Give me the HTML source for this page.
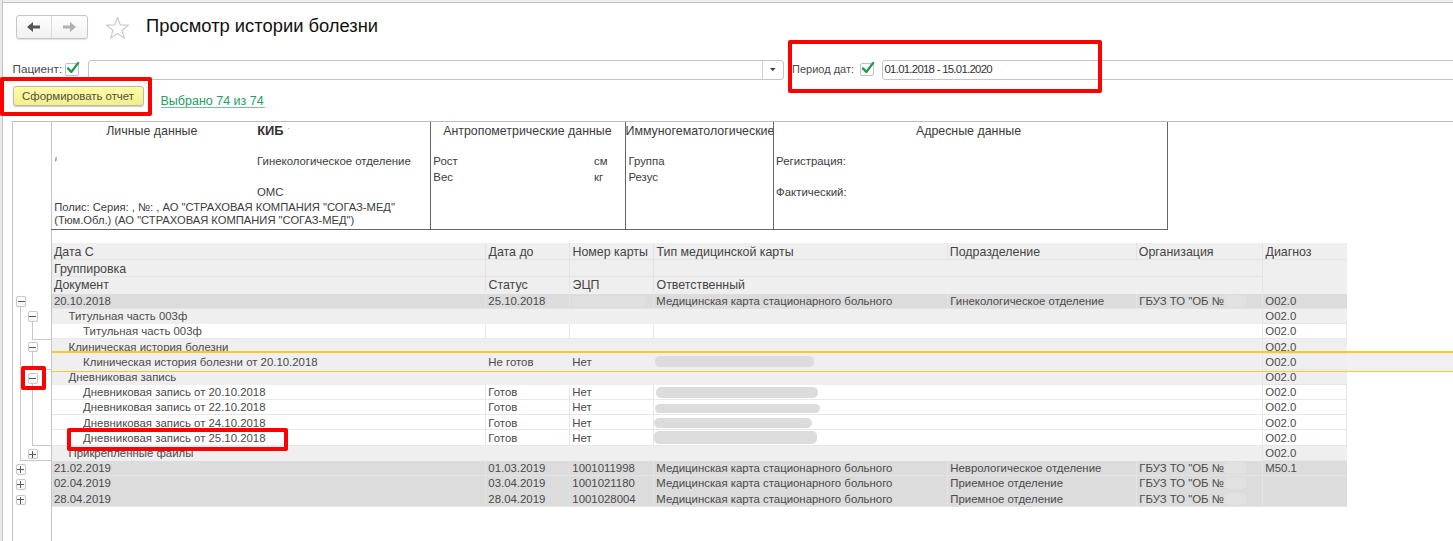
<!DOCTYPE html>
<html><head><meta charset="utf-8"><style>
html,body{margin:0;padding:0;}
body{width:1453px;height:541px;overflow:hidden;position:relative;background:#fff;font-family:"Liberation Sans", sans-serif;}
body div, body span, body svg{position:absolute;}
span{white-space:nowrap;line-height:1;}
</style></head><body>
<div style="left:0px;top:0px;width:1453px;height:2px;background:#efefef"></div>
<div style="left:0px;top:2px;width:1453px;height:1px;background:#c2c2c2"></div>
<div style="left:0px;top:0px;width:2px;height:541px;background:#e9e9e9"></div>
<div style="left:2px;top:0px;width:1px;height:541px;background:#c2c2c2"></div>
<div style="left:15.6px;top:15.2px;width:72.4px;height:23.4px;box-sizing:border-box;border:1px solid #c6c6c6;border-radius:3px;background:linear-gradient(#ffffff,#f1f1f1);box-shadow:0 1px 1px rgba(0,0,0,0.12)"></div>
<div style="left:51.4px;top:16px;width:1px;height:22px;background:#dcdcdc"></div>
<svg style="position:absolute;left:26px;top:21px" width="16" height="12" viewBox="0 0 16 12"><path d="M1 6 L7 1 L7 4.5 L14 4.5 L14 7.5 L7 7.5 L7 11 Z" fill="#555"/></svg>
<svg style="position:absolute;left:61.4px;top:21px" width="16" height="12" viewBox="0 0 16 12"><path d="M15 6 L9 1 L9 4.5 L2 4.5 L2 7.5 L9 7.5 L9 11 Z" fill="#b0b0b0"/></svg>
<svg style="position:absolute;left:105px;top:16px" width="25" height="24" viewBox="0 0 25 24"><path d="M12.5 1.5 L15.3 9 L23.5 9.2 L17 14.2 L19.4 22.3 L12.5 17.6 L5.6 22.3 L8 14.2 L1.5 9.2 L9.7 9 Z" fill="none" stroke="#c9ccd0" stroke-width="1.2" stroke-linejoin="round"/></svg>
<span style="left:146px;top:17.27px;font-size:18.35px;color:#111;">Просмотр истории болезни</span>
<span style="left:12.5px;top:63.40px;font-size:11.7px;color:#4a4a4a;">Пациент:</span>
<div style="left:65.3px;top:63px;width:13.4px;height:12.8px;box-sizing:border-box;border:1px solid #c2c2c2;border-radius:2px;background:#fff"></div>
<svg style="position:absolute;left:65px;top:60px" width="16" height="16" viewBox="0 0 16 16"><path d="M3 8.4 L6.3 12 L13.2 2.9" fill="none" stroke="#1f9a4a" stroke-width="2.3" stroke-linecap="round" stroke-linejoin="round"/></svg>
<div style="left:87.6px;top:59.6px;width:696px;height:20px;box-sizing:border-box;border:1px solid #c4c4c4;border-radius:3px;background:#fff"></div>
<div style="left:762.4px;top:60.6px;width:1px;height:17.999999999999993px;background:#d0d0d0"></div>
<svg style="position:absolute;left:769.6px;top:68.2px" width="6" height="4" viewBox="0 0 6 4"><path d="M0 0 L5.6 0 L2.8 3.3 Z" fill="#444"/></svg>
<span style="left:792px;top:63.99px;font-size:11.0px;color:#4a4a4a;">Период дат:</span>
<div style="left:860.3px;top:63px;width:13.4px;height:12.8px;box-sizing:border-box;border:1px solid #c2c2c2;border-radius:2px;background:#fff"></div>
<svg style="position:absolute;left:860px;top:60px" width="16" height="16" viewBox="0 0 16 16"><path d="M3 8.4 L6.3 12 L13.2 2.9" fill="none" stroke="#1f9a4a" stroke-width="2.3" stroke-linecap="round" stroke-linejoin="round"/></svg>
<div style="left:882px;top:59.6px;width:600px;height:20px;box-sizing:border-box;border:1px solid #c4c4c4;border-radius:3px;background:#fff"></div>
<span style="left:884.5px;top:63.75px;font-size:11.4px;color:#333;letter-spacing:-0.73px">01.01.2018 - 15.01.2020</span>
<div style="left:787.5px;top:39.5px;width:314.5px;height:53px;box-sizing:border-box;border:4px solid #fd0000;border-radius:2px"></div>
<div style="left:12.5px;top:86.4px;width:131px;height:20px;box-sizing:border-box;border:1px solid #bdbba6;border-radius:3px;background:linear-gradient(#fefea8,#f3ef8e);box-shadow:0 1px 1px rgba(0,0,0,0.22)"></div>
<span style="left:22.1px;top:91.15px;font-size:11.4px;color:#505045;">Сформировать отчет</span>
<div style="left:0px;top:77.1px;width:152.4px;height:38.9px;box-sizing:border-box;border:4px solid #fd0000;border-radius:2px"></div>
<span style="left:160.5px;top:94.82px;font-size:12.5px;color:#22a064;">Выбрано 74 из 74</span>
<div style="left:160.5px;top:106.8px;width:104.0px;height:1.2px;background:#6cc393"></div>
<div style="left:12px;top:121px;width:1441px;height:1px;background:#bdbdbd"></div>
<div style="left:12px;top:121px;width:1px;height:420px;background:#c6c6c6"></div>
<div style="left:51px;top:121px;width:1px;height:420px;background:#c6c6c6"></div>
<div style="left:430px;top:122px;width:1px;height:108px;background:#666"></div>
<div style="left:625px;top:122px;width:1px;height:108px;background:#666"></div>
<div style="left:773px;top:122px;width:1px;height:108px;background:#666"></div>
<div style="left:1167px;top:122px;width:1px;height:108px;background:#666"></div>
<div style="left:51px;top:229px;width:1117px;height:1px;background:#666"></div>
<span style="left:106.2px;top:125.10px;font-size:12.4px;color:#3c3c3c;">Личные данные</span>
<span style="left:257.2px;top:124.68px;font-size:12.9px;color:#333;font-weight:bold">КИБ</span>
<div style="left:287.8px;top:127.5px;width:1px;height:1.2px;background:#bbb"></div>
<svg style="position:absolute;left:53px;top:155px" width="5" height="10" viewBox="0 0 5 10"><path d="M3.2 2.2 L2.7 6.2" stroke="#7a6a60" stroke-width="1.1" fill="none"/></svg>
<span style="left:257px;top:156.25px;font-size:11.4px;color:#3c3c3c;">Гинекологическое отделение</span>
<span style="left:257px;top:187.25px;font-size:11.4px;color:#3c3c3c;">ОМС</span>
<span style="left:54.2px;top:202.02px;font-size:11.2px;color:#3c3c3c;">Полис: Серия: , №: , АО "СТРАХОВАЯ КОМПАНИЯ "СОГАЗ-МЕД"</span>
<span style="left:54.2px;top:214.92px;font-size:11.2px;color:#3c3c3c;">(Тюм.Обл.) (АО "СТРАХОВАЯ КОМПАНИЯ "СОГАЗ-МЕД")</span>
<span style="left:443.2px;top:125.10px;font-size:12.4px;color:#3c3c3c;">Антропометрические данные</span>
<span style="left:433.3px;top:156.25px;font-size:11.4px;color:#3c3c3c;">Рост</span>
<span style="left:433.3px;top:171.75px;font-size:11.4px;color:#3c3c3c;">Вес</span>
<span style="left:594px;top:156.25px;font-size:11.4px;color:#3c3c3c;">см</span>
<span style="left:594px;top:171.75px;font-size:11.4px;color:#3c3c3c;">кг</span>
<div style="left:626px;top:121px;width:147px;height:30px;overflow:hidden">
<span style="left:-0.5px;top:4.10px;font-size:12.4px;color:#3c3c3c;">Иммуногематологические</span>
</div>
<span style="left:628.4px;top:156.25px;font-size:11.4px;color:#3c3c3c;">Группа</span>
<span style="left:628.4px;top:171.75px;font-size:11.4px;color:#3c3c3c;">Резус</span>
<span style="left:776.1px;top:156.25px;font-size:11.4px;color:#3c3c3c;">Регистрация:</span>
<span style="left:776.1px;top:187.25px;font-size:11.4px;color:#3c3c3c;">Фактический:</span>
<span style="left:915.9px;top:124.80px;font-size:12.4px;color:#3c3c3c;">Адресные данные</span>
<div style="left:52px;top:243px;width:1295px;height:50.6px;background:#efefef"></div>
<div style="left:52px;top:259px;width:1295px;height:1px;background:#e4e4e4"></div>
<div style="left:52px;top:276px;width:1210px;height:1px;background:#e4e4e4"></div>
<div style="left:485px;top:243px;width:1px;height:16px;background:#e4e4e4"></div>
<div style="left:569px;top:243px;width:1px;height:16px;background:#e4e4e4"></div>
<div style="left:653px;top:243px;width:1px;height:16px;background:#e4e4e4"></div>
<div style="left:947px;top:243px;width:1px;height:16px;background:#e4e4e4"></div>
<div style="left:1136px;top:243px;width:1px;height:16px;background:#e4e4e4"></div>
<div style="left:1262px;top:243px;width:1px;height:16px;background:#e4e4e4"></div>
<div style="left:485px;top:259px;width:1px;height:34px;background:#e4e4e4"></div>
<div style="left:569px;top:259px;width:1px;height:34px;background:#e4e4e4"></div>
<div style="left:653px;top:259px;width:1px;height:34px;background:#e4e4e4"></div>
<div style="left:1262px;top:259px;width:1px;height:34px;background:#e4e4e4"></div>
<span style="left:53.9px;top:246.10px;font-size:12.4px;color:#444;">Дата С</span>
<span style="left:488.5px;top:246.10px;font-size:12.4px;color:#444;">Дата до</span>
<span style="left:572.5px;top:246.10px;font-size:12.4px;color:#444;">Номер карты</span>
<span style="left:656.5px;top:246.10px;font-size:12.4px;color:#444;">Тип медицинской карты</span>
<span style="left:949.8px;top:246.10px;font-size:12.4px;color:#444;">Подразделение</span>
<span style="left:1138.8px;top:246.10px;font-size:12.4px;color:#444;">Организация</span>
<span style="left:1265.5px;top:246.10px;font-size:12.4px;color:#444;">Диагноз</span>
<span style="left:53.9px;top:262.70px;font-size:12.4px;color:#444;">Группировка</span>
<span style="left:53.9px;top:279.10px;font-size:12.4px;color:#444;">Документ</span>
<span style="left:488.5px;top:279.10px;font-size:12.4px;color:#444;">Статус</span>
<span style="left:572.5px;top:279.10px;font-size:12.4px;color:#444;">ЭЦП</span>
<span style="left:656.5px;top:279.10px;font-size:12.4px;color:#444;">Ответственный</span>
<div style="left:52px;top:293.6px;width:1295px;height:15.29px;background:#dcdcdc"></div>
<div style="left:52px;top:308.29px;width:1295px;height:1px;background:#e4e4e4"></div>
<div style="left:485px;top:293.6px;width:1px;height:15.189999999999998px;background:#e4e4e4"></div>
<div style="left:569px;top:293.6px;width:1px;height:15.189999999999998px;background:#e4e4e4"></div>
<div style="left:653px;top:293.6px;width:1px;height:15.189999999999998px;background:#e4e4e4"></div>
<div style="left:947px;top:293.6px;width:1px;height:15.189999999999998px;background:#e4e4e4"></div>
<div style="left:1136px;top:293.6px;width:1px;height:15.189999999999998px;background:#e4e4e4"></div>
<div style="left:1262px;top:293.6px;width:1px;height:15.189999999999998px;background:#e4e4e4"></div>
<span style="left:53.9px;top:296.05px;font-size:11.4px;color:#4a4a4a;">20.10.2018</span>
<span style="left:488.3px;top:296.05px;font-size:11.4px;color:#4a4a4a;">25.10.2018</span>
<span style="left:656.3px;top:296.05px;font-size:11.4px;color:#4a4a4a;">Медицинская карта стационарного больного</span>
<span style="left:950.3px;top:296.05px;font-size:11.4px;color:#4a4a4a;">Гинекологическое отделение</span>
<span style="left:1139.3px;top:296.05px;font-size:11.4px;color:#4a4a4a;">ГБУЗ ТО "ОБ №</span>
<span style="left:1265.3px;top:296.05px;font-size:11.4px;color:#4a4a4a;">O02.0</span>
<div style="left:52px;top:308.79px;width:1295px;height:15.29px;background:#efefef"></div>
<div style="left:1262px;top:308.79px;width:1px;height:15.189999999999998px;background:#e6e6e6"></div>
<div style="left:1262px;top:322.98px;width:85px;height:1px;background:#e6e6e6"></div>
<span style="left:68.5px;top:311.24px;font-size:11.4px;color:#4a4a4a;">Титульная часть 003ф</span>
<span style="left:1265.3px;top:311.24px;font-size:11.4px;color:#4a4a4a;">O02.0</span>
<div style="left:52px;top:323.98px;width:1295px;height:15.29px;background:#ffffff"></div>
<div style="left:52px;top:338.17px;width:1295px;height:1px;background:#e8e8e8"></div>
<div style="left:485px;top:323.98px;width:1px;height:15.189999999999998px;background:#e8e8e8"></div>
<div style="left:569px;top:323.98px;width:1px;height:15.189999999999998px;background:#e8e8e8"></div>
<div style="left:653px;top:323.98px;width:1px;height:15.189999999999998px;background:#e8e8e8"></div>
<div style="left:1262px;top:323.98px;width:1px;height:15.189999999999998px;background:#e8e8e8"></div>
<div style="left:1346px;top:323.98px;width:1px;height:15.189999999999998px;background:#e8e8e8"></div>
<span style="left:83.1px;top:326.43px;font-size:11.4px;color:#4a4a4a;">Титульная часть 003ф</span>
<span style="left:1265.3px;top:326.43px;font-size:11.4px;color:#4a4a4a;">O02.0</span>
<div style="left:52px;top:339.17px;width:1295px;height:15.29px;background:#efefef"></div>
<div style="left:1262px;top:339.17px;width:1px;height:15.189999999999998px;background:#e6e6e6"></div>
<div style="left:1262px;top:353.36px;width:85px;height:1px;background:#e6e6e6"></div>
<span style="left:68.5px;top:341.62px;font-size:11.4px;color:#4a4a4a;">Клиническая история болезни</span>
<span style="left:1265.3px;top:341.62px;font-size:11.4px;color:#4a4a4a;">O02.0</span>
<div style="left:52px;top:354.36px;width:1295px;height:15.29px;background:#efefef"></div>
<div style="left:1262px;top:354.36px;width:1px;height:15.189999999999998px;background:#e6e6e6"></div>
<div style="left:1262px;top:368.55px;width:85px;height:1px;background:#e6e6e6"></div>
<span style="left:83.1px;top:356.81px;font-size:11.4px;color:#4a4a4a;">Клиническая история болезни от 20.10.2018</span>
<span style="left:488.3px;top:356.81px;font-size:11.4px;color:#4a4a4a;">Не готов</span>
<span style="left:572.3px;top:356.81px;font-size:11.4px;color:#4a4a4a;">Нет</span>
<span style="left:1265.3px;top:356.81px;font-size:11.4px;color:#4a4a4a;">O02.0</span>
<div style="left:52px;top:369.55px;width:1295px;height:15.29px;background:#efefef"></div>
<div style="left:1262px;top:369.55px;width:1px;height:15.189999999999998px;background:#e6e6e6"></div>
<div style="left:1262px;top:383.74px;width:85px;height:1px;background:#e6e6e6"></div>
<span style="left:68.5px;top:372.00px;font-size:11.4px;color:#4a4a4a;">Дневниковая запись</span>
<span style="left:1265.3px;top:372.00px;font-size:11.4px;color:#4a4a4a;">O02.0</span>
<div style="left:52px;top:384.74px;width:1295px;height:15.29px;background:#ffffff"></div>
<div style="left:52px;top:398.93px;width:1295px;height:1px;background:#e8e8e8"></div>
<div style="left:485px;top:384.74px;width:1px;height:15.189999999999998px;background:#e8e8e8"></div>
<div style="left:569px;top:384.74px;width:1px;height:15.189999999999998px;background:#e8e8e8"></div>
<div style="left:653px;top:384.74px;width:1px;height:15.189999999999998px;background:#e8e8e8"></div>
<div style="left:1262px;top:384.74px;width:1px;height:15.189999999999998px;background:#e8e8e8"></div>
<div style="left:1346px;top:384.74px;width:1px;height:15.189999999999998px;background:#e8e8e8"></div>
<span style="left:83.1px;top:387.19px;font-size:11.4px;color:#4a4a4a;">Дневниковая запись от 20.10.2018</span>
<span style="left:488.3px;top:387.19px;font-size:11.4px;color:#4a4a4a;">Готов</span>
<span style="left:572.3px;top:387.19px;font-size:11.4px;color:#4a4a4a;">Нет</span>
<span style="left:1265.3px;top:387.19px;font-size:11.4px;color:#4a4a4a;">O02.0</span>
<div style="left:52px;top:399.93px;width:1295px;height:15.29px;background:#ffffff"></div>
<div style="left:52px;top:414.12px;width:1295px;height:1px;background:#e8e8e8"></div>
<div style="left:485px;top:399.93px;width:1px;height:15.189999999999998px;background:#e8e8e8"></div>
<div style="left:569px;top:399.93px;width:1px;height:15.189999999999998px;background:#e8e8e8"></div>
<div style="left:653px;top:399.93px;width:1px;height:15.189999999999998px;background:#e8e8e8"></div>
<div style="left:1262px;top:399.93px;width:1px;height:15.189999999999998px;background:#e8e8e8"></div>
<div style="left:1346px;top:399.93px;width:1px;height:15.189999999999998px;background:#e8e8e8"></div>
<span style="left:83.1px;top:402.38px;font-size:11.4px;color:#4a4a4a;">Дневниковая запись от 22.10.2018</span>
<span style="left:488.3px;top:402.38px;font-size:11.4px;color:#4a4a4a;">Готов</span>
<span style="left:572.3px;top:402.38px;font-size:11.4px;color:#4a4a4a;">Нет</span>
<span style="left:1265.3px;top:402.38px;font-size:11.4px;color:#4a4a4a;">O02.0</span>
<div style="left:52px;top:415.12px;width:1295px;height:15.29px;background:#ffffff"></div>
<div style="left:52px;top:429.31px;width:1295px;height:1px;background:#e8e8e8"></div>
<div style="left:485px;top:415.12px;width:1px;height:15.189999999999998px;background:#e8e8e8"></div>
<div style="left:569px;top:415.12px;width:1px;height:15.189999999999998px;background:#e8e8e8"></div>
<div style="left:653px;top:415.12px;width:1px;height:15.189999999999998px;background:#e8e8e8"></div>
<div style="left:1262px;top:415.12px;width:1px;height:15.189999999999998px;background:#e8e8e8"></div>
<div style="left:1346px;top:415.12px;width:1px;height:15.189999999999998px;background:#e8e8e8"></div>
<span style="left:83.1px;top:417.57px;font-size:11.4px;color:#4a4a4a;">Дневниковая запись от 24.10.2018</span>
<span style="left:488.3px;top:417.57px;font-size:11.4px;color:#4a4a4a;">Готов</span>
<span style="left:572.3px;top:417.57px;font-size:11.4px;color:#4a4a4a;">Нет</span>
<span style="left:1265.3px;top:417.57px;font-size:11.4px;color:#4a4a4a;">O02.0</span>
<div style="left:52px;top:430.31px;width:1295px;height:15.29px;background:#ffffff"></div>
<div style="left:52px;top:444.5px;width:1295px;height:1px;background:#e8e8e8"></div>
<div style="left:485px;top:430.31000000000006px;width:1px;height:15.189999999999998px;background:#e8e8e8"></div>
<div style="left:569px;top:430.31000000000006px;width:1px;height:15.189999999999998px;background:#e8e8e8"></div>
<div style="left:653px;top:430.31000000000006px;width:1px;height:15.189999999999998px;background:#e8e8e8"></div>
<div style="left:1262px;top:430.31000000000006px;width:1px;height:15.189999999999998px;background:#e8e8e8"></div>
<div style="left:1346px;top:430.31000000000006px;width:1px;height:15.189999999999998px;background:#e8e8e8"></div>
<span style="left:83.1px;top:432.76px;font-size:11.4px;color:#4a4a4a;">Дневниковая запись от 25.10.2018</span>
<span style="left:488.3px;top:432.76px;font-size:11.4px;color:#4a4a4a;">Готов</span>
<span style="left:572.3px;top:432.76px;font-size:11.4px;color:#4a4a4a;">Нет</span>
<span style="left:1265.3px;top:432.76px;font-size:11.4px;color:#4a4a4a;">O02.0</span>
<div style="left:52px;top:445.5px;width:1295px;height:15.29px;background:#efefef"></div>
<div style="left:1262px;top:445.5px;width:1px;height:15.189999999999998px;background:#e6e6e6"></div>
<div style="left:1262px;top:459.69px;width:85px;height:1px;background:#e6e6e6"></div>
<span style="left:68.5px;top:447.95px;font-size:11.4px;color:#4a4a4a;">Прикрепленные файлы</span>
<span style="left:1265.3px;top:447.95px;font-size:11.4px;color:#4a4a4a;">O02.0</span>
<div style="left:52px;top:460.69px;width:1295px;height:15.29px;background:#dcdcdc"></div>
<div style="left:52px;top:475.38px;width:1295px;height:1px;background:#e4e4e4"></div>
<div style="left:485px;top:460.69000000000005px;width:1px;height:15.189999999999998px;background:#e4e4e4"></div>
<div style="left:569px;top:460.69000000000005px;width:1px;height:15.189999999999998px;background:#e4e4e4"></div>
<div style="left:653px;top:460.69000000000005px;width:1px;height:15.189999999999998px;background:#e4e4e4"></div>
<div style="left:947px;top:460.69000000000005px;width:1px;height:15.189999999999998px;background:#e4e4e4"></div>
<div style="left:1136px;top:460.69000000000005px;width:1px;height:15.189999999999998px;background:#e4e4e4"></div>
<div style="left:1262px;top:460.69000000000005px;width:1px;height:15.189999999999998px;background:#e4e4e4"></div>
<span style="left:53.9px;top:463.14px;font-size:11.4px;color:#4a4a4a;">21.02.2019</span>
<span style="left:488.3px;top:463.14px;font-size:11.4px;color:#4a4a4a;">01.03.2019</span>
<span style="left:572.3px;top:463.14px;font-size:11.4px;color:#4a4a4a;">1001011998</span>
<span style="left:656.3px;top:463.14px;font-size:11.4px;color:#4a4a4a;">Медицинская карта стационарного больного</span>
<span style="left:950.3px;top:463.14px;font-size:11.4px;color:#4a4a4a;">Неврологическое отделение</span>
<span style="left:1139.3px;top:463.14px;font-size:11.4px;color:#4a4a4a;">ГБУЗ ТО "ОБ №</span>
<span style="left:1265.3px;top:463.14px;font-size:11.4px;color:#4a4a4a;">M50.1</span>
<div style="left:52px;top:475.88px;width:1295px;height:15.29px;background:#dcdcdc"></div>
<div style="left:52px;top:490.57px;width:1295px;height:1px;background:#e4e4e4"></div>
<div style="left:485px;top:475.88px;width:1px;height:15.189999999999998px;background:#e4e4e4"></div>
<div style="left:569px;top:475.88px;width:1px;height:15.189999999999998px;background:#e4e4e4"></div>
<div style="left:653px;top:475.88px;width:1px;height:15.189999999999998px;background:#e4e4e4"></div>
<div style="left:947px;top:475.88px;width:1px;height:15.189999999999998px;background:#e4e4e4"></div>
<div style="left:1136px;top:475.88px;width:1px;height:15.189999999999998px;background:#e4e4e4"></div>
<div style="left:1262px;top:475.88px;width:1px;height:15.189999999999998px;background:#e4e4e4"></div>
<span style="left:53.9px;top:478.33px;font-size:11.4px;color:#4a4a4a;">02.04.2019</span>
<span style="left:488.3px;top:478.33px;font-size:11.4px;color:#4a4a4a;">03.04.2019</span>
<span style="left:572.3px;top:478.33px;font-size:11.4px;color:#4a4a4a;">1001021180</span>
<span style="left:656.3px;top:478.33px;font-size:11.4px;color:#4a4a4a;">Медицинская карта стационарного больного</span>
<span style="left:950.3px;top:478.33px;font-size:11.4px;color:#4a4a4a;">Приемное отделение</span>
<span style="left:1139.3px;top:478.33px;font-size:11.4px;color:#4a4a4a;">ГБУЗ ТО "ОБ №</span>
<div style="left:52px;top:491.07px;width:1295px;height:15.29px;background:#dcdcdc"></div>
<div style="left:52px;top:505.76px;width:1295px;height:1px;background:#e4e4e4"></div>
<div style="left:485px;top:491.07000000000005px;width:1px;height:15.189999999999998px;background:#e4e4e4"></div>
<div style="left:569px;top:491.07000000000005px;width:1px;height:15.189999999999998px;background:#e4e4e4"></div>
<div style="left:653px;top:491.07000000000005px;width:1px;height:15.189999999999998px;background:#e4e4e4"></div>
<div style="left:947px;top:491.07000000000005px;width:1px;height:15.189999999999998px;background:#e4e4e4"></div>
<div style="left:1136px;top:491.07000000000005px;width:1px;height:15.189999999999998px;background:#e4e4e4"></div>
<div style="left:1262px;top:491.07000000000005px;width:1px;height:15.189999999999998px;background:#e4e4e4"></div>
<span style="left:53.9px;top:493.52px;font-size:11.4px;color:#4a4a4a;">28.04.2019</span>
<span style="left:488.3px;top:493.52px;font-size:11.4px;color:#4a4a4a;">28.04.2019</span>
<span style="left:572.3px;top:493.52px;font-size:11.4px;color:#4a4a4a;">1001028004</span>
<span style="left:656.3px;top:493.52px;font-size:11.4px;color:#4a4a4a;">Медицинская карта стационарного больного</span>
<span style="left:950.3px;top:493.52px;font-size:11.4px;color:#4a4a4a;">Приемное отделение</span>
<span style="left:1139.3px;top:493.52px;font-size:11.4px;color:#4a4a4a;">ГБУЗ ТО "ОБ №</span>
<div style="left:570.6px;top:295.5px;width:76.29999999999995px;height:11.5px;background:#e0e0e0;border-radius:5px;filter:blur(0.4px)"></div>
<div style="left:1223.5px;top:295.2px;width:23.0px;height:12.0px;background:#e1e1e1;border-radius:5px;filter:blur(0.4px)"></div>
<div style="left:1223.5px;top:462.29px;width:23.0px;height:12.0px;background:#e1e1e1;border-radius:5px;filter:blur(0.4px)"></div>
<div style="left:1223.5px;top:477.48px;width:23.0px;height:12.0px;background:#e1e1e1;border-radius:5px;filter:blur(0.4px)"></div>
<div style="left:1223.5px;top:492.67px;width:23.0px;height:12.0px;background:#e1e1e1;border-radius:5px;filter:blur(0.4px)"></div>
<div style="left:654.8px;top:355.8px;width:159.60000000000002px;height:11.5px;background:#dcdcdc;border-radius:5px;filter:blur(0.4px)"></div>
<div style="left:656.4px;top:386.6px;width:161.80000000000007px;height:11.199999999999989px;background:#dcdcdc;border-radius:5px;filter:blur(0.4px)"></div>
<div style="left:655.4px;top:403.6px;width:165.10000000000002px;height:9.599999999999966px;background:#dcdcdc;border-radius:5px;filter:blur(0.4px)"></div>
<div style="left:653.9px;top:417.5px;width:158.60000000000002px;height:10.0px;background:#dcdcdc;border-radius:5px;filter:blur(0.4px)"></div>
<div style="left:654.4px;top:431px;width:162.89999999999998px;height:13px;background:#dcdcdc;border-radius:5px;filter:blur(0.4px)"></div>
<div style="left:1347px;top:352.5px;width:106px;height:18.5px;background:#f0f0f0"></div>
<div style="left:52px;top:351.3px;width:1401px;height:1.8px;background:#f8c92e"></div>
<div style="left:52px;top:370.6px;width:1401px;height:1.9px;background:#f8c92e"></div>
<div style="left:20px;top:306px;width:1px;height:154px;background:#c8c8c8"></div>
<div style="left:20px;top:460px;width:31px;height:1px;background:#c8c8c8"></div>
<div style="left:32px;top:321px;width:1px;height:18px;background:#c8c8c8"></div>
<div style="left:32px;top:339px;width:19px;height:1px;background:#c8c8c8"></div>
<div style="left:32px;top:352px;width:1px;height:17px;background:#c8c8c8"></div>
<div style="left:32px;top:369px;width:19px;height:1px;background:#c8c8c8"></div>
<div style="left:32px;top:383px;width:1px;height:62px;background:#c8c8c8"></div>
<div style="left:32px;top:445px;width:19px;height:1px;background:#c8c8c8"></div>
<div style="left:15.8px;top:296.2px;width:10.4px;height:10.4px;box-sizing:border-box;border:1px solid #c9c9c9;border-radius:2px;background:linear-gradient(#fff,#f4f4f4);box-shadow:0 0 1px rgba(0,0,0,0.15)"></div>
<div style="left:17.6px;top:300.9px;width:7.0px;height:1px;background:#5a5a5a"></div>
<div style="left:27.5px;top:311.4px;width:10.4px;height:10.4px;box-sizing:border-box;border:1px solid #c9c9c9;border-radius:2px;background:linear-gradient(#fff,#f4f4f4);box-shadow:0 0 1px rgba(0,0,0,0.15)"></div>
<div style="left:29.3px;top:316.09999999999997px;width:6.9999999999999964px;height:1px;background:#5a5a5a"></div>
<div style="left:27.5px;top:341.9px;width:10.4px;height:10.4px;box-sizing:border-box;border:1px solid #c9c9c9;border-radius:2px;background:linear-gradient(#fff,#f4f4f4);box-shadow:0 0 1px rgba(0,0,0,0.15)"></div>
<div style="left:29.3px;top:346.59999999999997px;width:6.9999999999999964px;height:1px;background:#5a5a5a"></div>
<div style="left:27.5px;top:373.2px;width:10.4px;height:10.4px;box-sizing:border-box;border:1px solid #c9c9c9;border-radius:2px;background:linear-gradient(#fff,#f4f4f4);box-shadow:0 0 1px rgba(0,0,0,0.15)"></div>
<div style="left:29.3px;top:377.9px;width:6.9999999999999964px;height:1px;background:#5a5a5a"></div>
<div style="left:27.5px;top:448.9px;width:10.4px;height:10.4px;box-sizing:border-box;border:1px solid #c9c9c9;border-radius:2px;background:linear-gradient(#fff,#f4f4f4);box-shadow:0 0 1px rgba(0,0,0,0.15)"></div>
<div style="left:29.3px;top:453.59999999999997px;width:6.9999999999999964px;height:1px;background:#5a5a5a"></div>
<div style="left:32.3px;top:450.8px;width:1px;height:7.0px;background:#5a5a5a"></div>
<div style="left:15.5px;top:464.2px;width:10.4px;height:10.4px;box-sizing:border-box;border:1px solid #c9c9c9;border-radius:2px;background:linear-gradient(#fff,#f4f4f4);box-shadow:0 0 1px rgba(0,0,0,0.15)"></div>
<div style="left:17.3px;top:468.9px;width:6.9999999999999964px;height:1px;background:#5a5a5a"></div>
<div style="left:20.299999999999997px;top:466.1px;width:1px;height:7.0px;background:#5a5a5a"></div>
<div style="left:15.5px;top:479.4px;width:10.4px;height:10.4px;box-sizing:border-box;border:1px solid #c9c9c9;border-radius:2px;background:linear-gradient(#fff,#f4f4f4);box-shadow:0 0 1px rgba(0,0,0,0.15)"></div>
<div style="left:17.3px;top:484.09999999999997px;width:6.9999999999999964px;height:1px;background:#5a5a5a"></div>
<div style="left:20.299999999999997px;top:481.3px;width:1px;height:7.0px;background:#5a5a5a"></div>
<div style="left:15.5px;top:494.59999999999997px;width:10.4px;height:10.4px;box-sizing:border-box;border:1px solid #c9c9c9;border-radius:2px;background:linear-gradient(#fff,#f4f4f4);box-shadow:0 0 1px rgba(0,0,0,0.15)"></div>
<div style="left:17.3px;top:499.29999999999995px;width:6.9999999999999964px;height:1px;background:#5a5a5a"></div>
<div style="left:20.299999999999997px;top:496.5px;width:1px;height:7.0px;background:#5a5a5a"></div>
<div style="left:20.5px;top:365.5px;width:25px;height:24.5px;box-sizing:border-box;border:4px solid #fd0000;border-radius:2px"></div>
<div style="left:66.8px;top:428.3px;width:221.5px;height:23px;box-sizing:border-box;border:4px solid #fd0000;border-radius:2px"></div>
</body></html>
